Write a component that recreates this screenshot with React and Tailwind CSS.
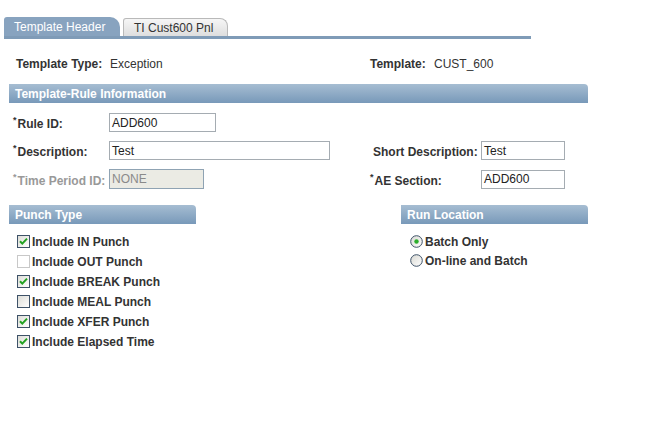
import React from "react";

function Req() {
  return <span className="text-[9px] leading-none align-top relative -top-[1px] mr-[1px]">*</span>;
}

function SectionBar({ title, className }) {
  return (
    <div
      className={
        "h-[19px] flex items-center pl-[6px] rounded-tr-[4px] bg-gradient-to-b from-[#a6bdd2] to-[#7899b9] text-white font-bold " +
        className
      }
    >
      {title}
    </div>
  );
}

function Field({ value, width, disabled }) {
  return (
    <div
      className={
        "h-[19px] shrink-0 flex items-center pl-[2px] border " +
        (disabled
          ? "bg-[#ebebe4] border-[#8fa3b3] text-[#8a8a8a] "
          : "bg-white border-[#a5acb2] text-[#222] ") +
        width
      }
    >
      {value}
    </div>
  );
}

function Check({ checked, faint }) {
  return (
    <svg width="13" height="13" viewBox="0 0 13 13" className="shrink-0">
      <defs>
        <linearGradient id="cbg" x1="0" y1="0" x2="1" y2="1">
          <stop offset="0" stopColor="#dcdcd6" />
          <stop offset="1" stopColor="#ffffff" />
        </linearGradient>
      </defs>
      <rect
        x="0.5"
        y="0.5"
        width="12"
        height="12"
        fill={faint ? "#fff" : "url(#cbg)"}
        stroke={faint ? "#c8c8c8" : "#3e5268"}
      />
      {checked && (
        <path d="M3 6.2 L5.3 8.6 L10 3.6" fill="none" stroke="#21a121" strokeWidth="2" />
      )}
    </svg>
  );
}

function Radio({ on }) {
  return (
    <svg width="13" height="13" viewBox="0 0 13 13" className="shrink-0">
      <defs>
        <linearGradient id="rbg" x1="0" y1="0" x2="1" y2="1">
          <stop offset="0" stopColor="#d8d8d2" />
          <stop offset="1" stopColor="#ffffff" />
        </linearGradient>
      </defs>
      <circle cx="6.5" cy="6.5" r="5.8" fill="url(#rbg)" stroke="#3e5268" strokeWidth="1" />
      {on && <circle cx="6.5" cy="6.5" r="2.2" fill="#2cae2c" />}
    </svg>
  );
}

const punches = [
  ["Include IN Punch", true],
  ["Include OUT Punch", false, true],
  ["Include BREAK Punch", true],
  ["Include MEAL Punch", false],
  ["Include XFER Punch", true],
  ["Include Elapsed Time", true],
];

export default function App() {
  return (
    <div className="w-[656px] h-[424px] bg-white text-[12px] leading-[14px] text-[#333] font-['Liberation_Sans',Arial,sans-serif] overflow-hidden">
      {/* tabs */}
      <div className="pt-[17px] pl-[4px] flex items-end">
        <div className="w-[116px] h-[19px] rounded-tl-[3px] rounded-tr-[10px] bg-[#88a3bf] text-white flex items-center pl-[10px]">
          Template Header
        </div>
        <div className="ml-[3px] w-[105px] h-[18px] rounded-tl-[3px] rounded-tr-[8px] border border-b-0 border-[#b9b9b9] bg-gradient-to-b from-[#f6f6f6] to-[#dedede] flex items-center pl-[10px] text-[#333]">
          TI Cust600 Pnl
        </div>
      </div>
      <div className="ml-[4px] w-[527px] h-[3px] bg-[#7f9bb7]" />

      {/* template info */}
      <div className="mt-[18px] h-[14px] flex items-center">
        <span className="pl-[16px] w-[110px] font-bold">Template Type:</span>
        <span className="w-[260px]">Exception</span>
        <span className="w-[64px] font-bold">Template:</span>
        <span>CUST_600</span>
      </div>

      <SectionBar title="Template-Rule Information" className="mt-[13px] ml-[9px] w-[579px]" />

      <div className="mt-[10px] h-[19px] flex items-center">
        <span className="pl-[13px] w-[109px] font-bold pt-[3px]">
          <Req />Rule ID:
        </span>
        <Field value="ADD600" width="w-[107px]" />
      </div>

      <div className="mt-[9px] h-[19px] flex items-center">
        <span className="pl-[13px] w-[109px] font-bold pt-[3px]">
          <Req />Description:
        </span>
        <Field value="Test" width="w-[221px]" />
        <span className="ml-[43px] w-[108px] font-bold pt-[3px]">Short Description:</span>
        <Field value="Test" width="w-[84px]" />
      </div>

      <div className="mt-[9px] h-[20px] flex items-center">
        <span className="pl-[13px] w-[109px] font-bold pt-[3px] text-[#999]">
          <Req />Time Period ID:
        </span>
        <Field value="NONE" width="w-[95px] h-[20px]" disabled />
        <span className="ml-[166px] w-[111px] font-bold pt-[3px]">
          <Req />AE Section:
        </span>
        <Field value="ADD600" width="w-[84px]" />
      </div>

      {/* lower panels */}
      <div className="mt-[16px] flex">
        <div className="ml-[9px] w-[187px]">
          <SectionBar title="Punch Type" className="w-[187px]" />
          <div className="mt-[7px] pl-[8px] flex flex-col">
            {punches.map(([label, checked, faint]) => (
              <div key={label} className="h-[20px] flex items-center gap-[2px] font-bold">
                <Check checked={checked} faint={faint} />
                <span className="pt-[1px]">{label}</span>
              </div>
            ))}
          </div>
        </div>
        <div className="ml-[205px] w-[187px]">
          <SectionBar title="Run Location" className="w-[187px]" />
          <div className="mt-[8px] pl-[9px] flex flex-col">
            <div className="h-[19px] flex items-center gap-[2px] font-bold">
              <Radio on />
              <span className="pt-[1px]">Batch Only</span>
            </div>
            <div className="h-[19px] flex items-center gap-[2px] font-bold">
              <Radio />
              <span className="pt-[1px]">On-line and Batch</span>
            </div>
          </div>
        </div>
      </div>
    </div>
  );
}
